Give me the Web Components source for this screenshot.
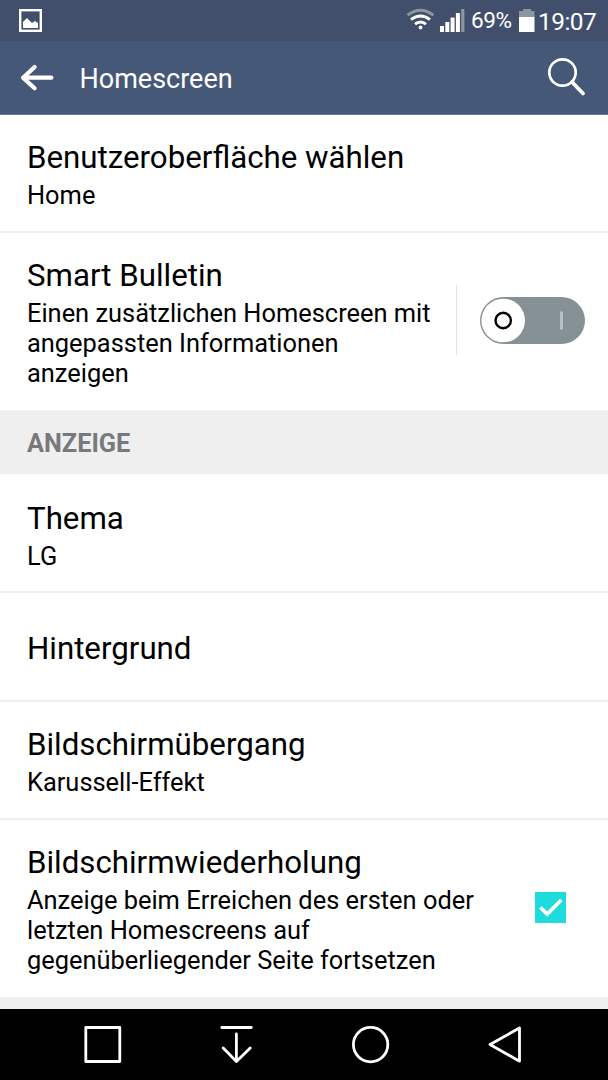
<!DOCTYPE html>
<html lang="de">
<head>
<meta charset="utf-8">
<title>Homescreen</title>
<style>
  body {
    margin: 0;
    background: #fff;
    color: #000;
    font-family: Roboto, "Liberation Sans", sans-serif;
  }
</style>
</head>
<body>
<settings-screen>
  <status-bar slot="top" battery="69%" time="19:07"></status-bar>
  <title-bar slot="top">Homescreen</title-bar>

  <setting-row style="--row-height: 118px">
    Benutzeroberfläche wählen
    <span slot="summary">Home</span>
  </setting-row>
  <setting-row divided last style="--row-height: 177px; --text-width: 412px">
    Smart Bulletin
    <span slot="summary">Einen zusätzlichen Homescreen mit angepassten Informationen anzeigen</span>
    <toggle-switch slot="control"></toggle-switch>
  </setting-row>
  <section-header>ANZEIGE</section-header>
  <setting-row style="--row-height: 119px; --row-top: 26px">
    Thema
    <span slot="summary">LG</span>
  </setting-row>
  <setting-row style="--row-height: 109px; --row-top: 37px">Hintergrund</setting-row>
  <setting-row style="--row-height: 118px">
    Bildschirmübergang
    <span slot="summary">Karussell-Effekt</span>
  </setting-row>
  <setting-row last style="--row-height: 177px; --text-width: 460px">
    Bildschirmwiederholung
    <span slot="summary">Anzeige beim Erreichen des ersten oder letzten Homescreens auf gegenüberliegender Seite fortsetzen</span>
    <check-box slot="control"></check-box>
  </setting-row>

  <nav-bar slot="bottom"></nav-bar>
</settings-screen>

<script>
/**
 * Small base class: puts the markup of the subclass into an open shadow root.
 */
class BaseElement extends HTMLElement {
  constructor() {
    super();
    this.attachShadow({ mode: 'open' });
  }

  connectedCallback() {
    this.shadowRoot.innerHTML = this.render();
  }
}

class SettingsScreen extends BaseElement {
  render() {
    return `
      <style>
        :host { display: flex; flex-direction: column; height: 1080px; overflow: hidden; }
        main { flex: 1; min-height: 0; overflow: hidden; background: #efefef; }
      </style>
      <slot name="top"></slot>
      <main><slot></slot></main>
      <slot name="bottom"></slot>`;
  }
}

class StatusBar extends BaseElement {
  render() {
    return `
      <style>
        :host {
          display: flex; align-items: center; box-sizing: border-box; height: 41px;
          padding: 0 12px 0 19px; background: #414f6c; color: #fff; line-height: 40px;
        }
        svg { display: block; flex: none; }
        .space { flex: 1; }
        .battery { font-size: 22.6px; letter-spacing: -0.5px; margin: 0 8px 0 -1px; width: 40px; white-space: nowrap; }
        .time { font-size: 24.4px; letter-spacing: -0.5px; margin: 2px 0 0 3px; width: 58px; white-space: nowrap; }
      </style>
      <svg width="23" height="41" viewBox="0 0 23 41">
        <rect x="1.2" y="10.2" width="20.6" height="20.6" fill="none" stroke="#fff" stroke-width="2.4"/>
        <path d="M4 28v-6l4-4 5 5 3-2 3 2v5z" fill="#fff"/>
      </svg>
      <span class="space"></span>
      <svg width="66" height="41" viewBox="0 0 66 41">
        <g fill="none" stroke-width="2.8">
          <path d="M1.5 15.2Q14.5 5.2 27.5 15.2" stroke="#8d969c"/>
          <path d="M5 19.7Q14.5 12.3 24 19.7" stroke="#fff"/>
          <path d="M9 24.2Q14.5 19.7 20 24.2" stroke="#fff"/>
        </g>
        <circle cx="14.5" cy="27.5" r="1.9" fill="#fff"/>
        <path d="M34 26h4v6h-4zM39.3 22h4v10h-4zM44.6 17.5h4v14.5h-4zM49.9 13h4v19h-4z" fill="#fff"/>
        <path d="M55.2 9h3.2v23h-3.2z" fill="#8d969c"/>
      </svg>
      <span class="battery">${this.getAttribute('battery')}</span>
      <svg width="16" height="41" viewBox="0 0 16 41">
        <path d="M4 9h8v2h3.5v6H0v-6h4z" fill="#8d969c"/>
        <path d="M0 17h15.5v15H0z" fill="#fff"/>
      </svg>
      <span class="time">${this.getAttribute('time')}</span>`;
  }
}

class TitleBar extends BaseElement {
  render() {
    return `
      <style>
        :host {
          display: flex; align-items: center; box-sizing: border-box; height: 74px;
          padding: 0 20px; background: #465878; border-bottom: 1px solid #697891; color: #fff;
        }
        h1 { flex: 1; margin: 2px 0 0 24.5px; font-size: 27px; font-weight: 400; line-height: 32px; }
      </style>
      <svg width="35" height="73" viewBox="0 0 35 73">
        <path d="M14.6 26L3.1 36.7l11.5 10.6M3.1 36.7h28.3" fill="none" stroke="#fff" stroke-width="4.2" stroke-linecap="round" stroke-linejoin="round"/>
      </svg>
      <h1><slot></slot></h1>
      <svg width="42" height="73" viewBox="0 0 42 73">
        <circle cx="16.5" cy="31.5" r="13.2" fill="none" stroke="#fff" stroke-width="2.7"/>
        <path d="M26 41l11 11.5" stroke="#fff" stroke-width="3.8" stroke-linecap="round"/>
      </svg>`;
  }
}

class SettingRow extends BaseElement {
  render() {
    return `
      <style>
        :host {
          display: flex; box-sizing: border-box; height: var(--row-height);
          padding-left: 27px; background: #fff; border-bottom: 2px solid #efefef;
        }
        :host([last]) { border-bottom: 0; }
        .text { width: var(--text-width, 560px); padding-top: var(--row-top, 24px); }
        .title { font-size: 31.25px; line-height: 37px; margin-bottom: 4px; }
        .summary { font-size: 25.42px; line-height: 30px; }
        .control {
          flex: 1; display: flex; align-items: center; justify-content: flex-end;
          align-self: center; height: 70px; margin-bottom: 3px;
        }
        :host([divided]) .control { margin-left: 17px; border-left: 1px solid #e5e5e5; }
      </style>
      <div class="text">
        <div class="title"><slot></slot></div>
        <div class="summary"><slot name="summary"></slot></div>
      </div>
      <div class="control"><slot name="control"></slot></div>`;
  }
}

class SectionHeader extends BaseElement {
  render() {
    return `
      <style>
        :host {
          display: block; box-sizing: border-box; height: 64px; padding: 2px 27px 0;
          background: #efefef; color: #777a7c; font-size: 25.3px; font-weight: 700; line-height: 63px;
        }
      </style>
      <slot></slot>`;
  }
}

class ToggleSwitch extends BaseElement {
  render() {
    return `
      <style>
        :host { display: block; margin-right: 23px; }
        svg { display: block; }
      </style>
      <svg width="105" height="47" viewBox="0 0 105 47">
        <rect width="105" height="47" rx="23.5" fill="#869197"/>
        <circle cx="23.2" cy="23.5" r="21.8" fill="#fff"/>
        <circle cx="23.2" cy="23.5" r="7.7" fill="none" stroke="#000" stroke-width="2.4"/>
        <path d="M80 14.5h3v18h-3z" fill="#b9bfc3"/>
      </svg>`;
  }
}

class CheckBox extends BaseElement {
  render() {
    return `
      <style>
        :host { display: block; margin-right: 42px; }
        svg { display: block; }
      </style>
      <svg width="31" height="31" viewBox="0 0 31 31">
        <rect width="31" height="31" fill="#20dbdc"/>
        <path d="M5.3 15.3l6.9 6.8L26.3 8" fill="none" stroke="#fff" stroke-width="3.6"/>
      </svg>`;
  }
}

class NavBar extends BaseElement {
  render() {
    return `
      <style>
        :host {
          display: flex; justify-content: space-between; align-items: center; box-sizing: border-box;
          height: 71px; padding: 0 83px; background: #000;
        }
        svg { display: block; fill: none; stroke: #fff; stroke-width: 2.8; stroke-linecap: round; stroke-linejoin: round; }
      </style>
      <svg width="40" height="40" viewBox="0 0 40 40"><path d="M2.8 2.5h34v34h-34z"/></svg>
      <svg width="40" height="40" viewBox="0 0 40 40"><path d="M4.8 2.5h29.5M19.4 9v27M6.2 23l13.2 13.5L33.2 23"/></svg>
      <svg width="40" height="40" viewBox="0 0 40 40"><circle cx="19.6" cy="19.6" r="17.2"/></svg>
      <svg width="40" height="40" viewBox="0 0 40 40"><path d="M34.5 3v33.2L5 19.5z"/></svg>`;
  }
}

customElements.define('settings-screen', SettingsScreen);
customElements.define('status-bar', StatusBar);
customElements.define('title-bar', TitleBar);
customElements.define('setting-row', SettingRow);
customElements.define('section-header', SectionHeader);
customElements.define('toggle-switch', ToggleSwitch);
customElements.define('check-box', CheckBox);
customElements.define('nav-bar', NavBar);
</script>
</body>
</html>
